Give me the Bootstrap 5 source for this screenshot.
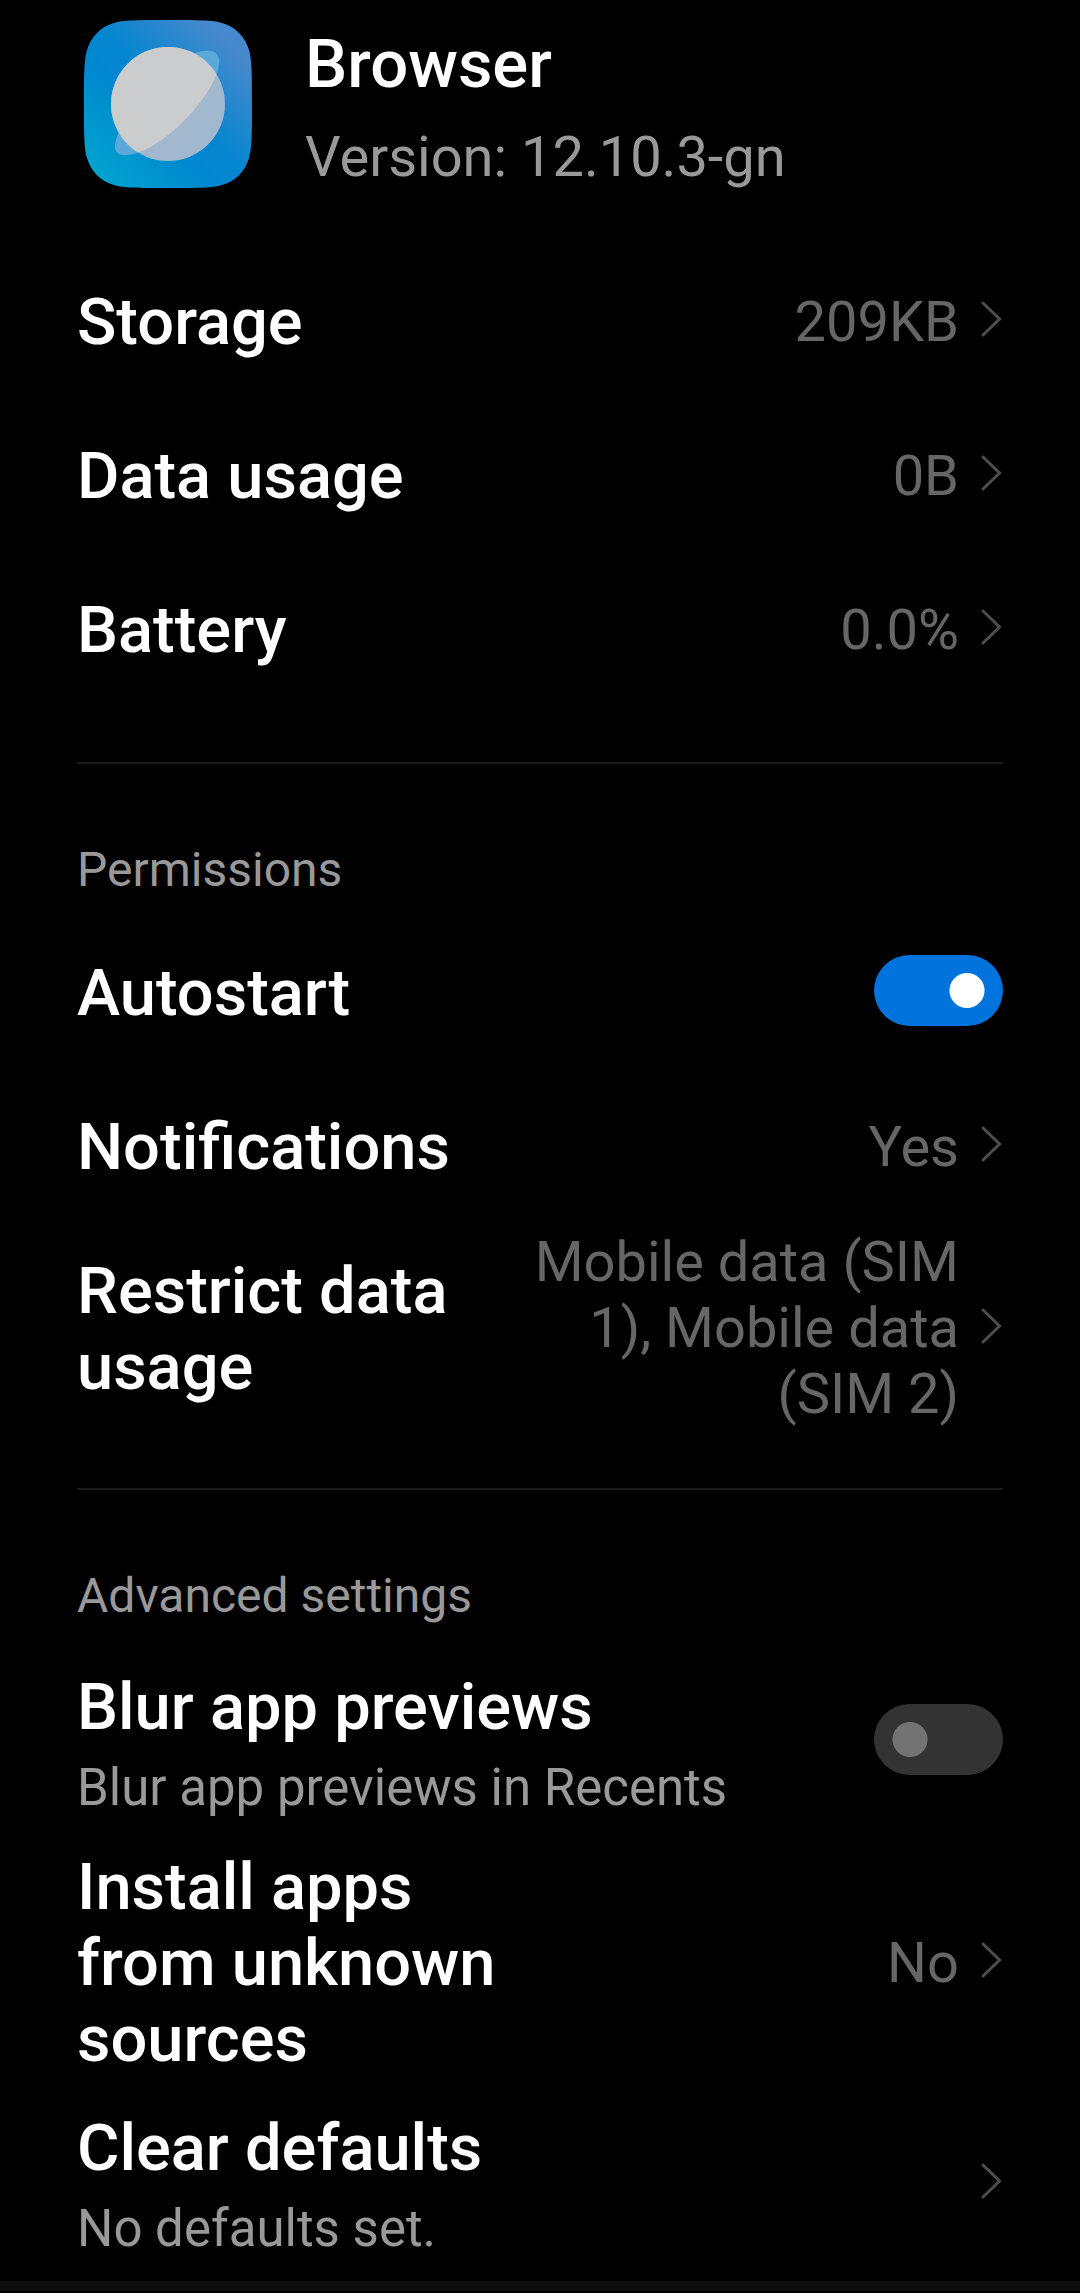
<!DOCTYPE html>
<html lang="en" data-bs-theme="dark">
<head>
<meta charset="utf-8">
<meta name="viewport" content="width=device-width, initial-scale=1">
<title>Browser - App info</title>
<link href="https://cdn.jsdelivr.net/npm/bootstrap@5.3.0/dist/css/bootstrap.min.css" rel="stylesheet">
<style>
body { background: #000; color: #fff; font-family: Roboto, "Noto Sans", sans-serif; }
.page-pad { padding-left: 77px; padding-right: 77px; }
.app-head { padding: 20px 7px 52px; gap: 53px; }
.app-icon { width: 168px; height: 168px; }
.app-text { padding-top: 6px; gap: 22px; }
.app-name, .row-title { font-size: 65px; line-height: 76px; font-weight: 500; }
.app-name { font-size: 67px; }
.app-version { font-size: 56px; line-height: 66px; color: #999; }
.setting { min-height: 154px; padding: 3px 0; gap: 20px; color: #fff; }
.setting-tall { min-height: 201px; }
.row-text { padding-top: 6px; }
.setting-tall .row-text { padding-top: 8px; }
.row-narrow { max-width: 48%; }
.row-sub { font-size: 51px; line-height: 62px; margin-top: 12px; color: #999; }
.row-value { font-size: 56px; line-height: 66px; color: #666; padding-top: 5px; max-width: 430px; }
.chevron { width: 24px; height: 38px; }
.group-line { height: 2px; background: #1a1a1a; margin: 58px 0 0; }
.group-title { font-size: 48px; line-height: 58px; font-weight: 400; color: #999; margin: 0; padding: 77px 0 14px; }
.form-check-input.toggle {
  width: 129px; height: 71px; border: 0; border-radius: 36px; margin: 0;
  background-color: #333; background-position: 0 0; background-size: 100% 100%;
  background-image: radial-gradient(circle at 36px 50%, #737373 17px, transparent 18px);
}
.form-check-input.toggle:checked {
  background-color: #0073dd; background-position: 0 0;
  background-image: radial-gradient(circle at 93px 50%, #fff 17px, transparent 18px);
}
.foot-band { height: 10px; background: #0e0e0e; }
</style>
</head>
<body>
<svg class="d-none" aria-hidden="true">
  <symbol id="chev" viewBox="0 0 24 38"><path d="M4 3 20.500 19 4 35" fill="none" stroke="#4d4d4d" stroke-width="3" stroke-linecap="round"/></symbol>
</svg>
<main class="page-pad">
  <header class="app-head d-flex align-items-start">
    <svg class="app-icon flex-shrink-0" viewBox="0 0 168 168" role="img" aria-label="Browser icon">
      <defs>
        <linearGradient id="tile" x1="0" y1="1" x2="1" y2="0">
          <stop offset="0.08" stop-color="#00a3ce"/><stop offset="0.4" stop-color="#0087d0"/><stop offset="0.54" stop-color="#0886d0"/><stop offset="0.86" stop-color="#4689cc"/>
        </linearGradient>
        <clipPath id="globe"><circle cx="84" cy="84" r="57"/></clipPath>
      </defs>
      <path fill="url(#tile)" d="M84 0C113 0 129 0 138 3C152 7 161 17 165 30C168 40 168 56 168 84S168 128 165 138C161 151 152 161 138 165C129 168 113 168 84 168S39 168 30 165C16 161 7 151 3 138C0 128 0 112 0 84S0 40 3 30C7 17 16 7 30 3C39 0 55 0 84 0Z"/>
      <path fill="#5aa9d8" d="M111 33C124 29 135 30 135 41C135 47 134 52 131 58L56 132C45 136 31 138 31 127C31 122 32 118 35 112Z"/>
      <circle cx="84" cy="84" r="57" fill="#a2b8cf"/>
      <path clip-path="url(#globe)" fill="#cbcccd" d="M20 20H135V41C135 47 134 52 131 58C118 87 84 121 56 132L20 140Z"/>
    </svg>
    <div class="app-text d-flex flex-column">
      <h1 class="app-name mb-0">Browser</h1>
      <div class="app-version">Version: 12.10.3-gn</div>
    </div>
  </header>

  <section aria-label="Usage">
    <a href="#storage" class="setting d-flex align-items-center text-decoration-none">
      <span class="row-title row-text row-narrow me-auto">Storage</span>
      <span class="row-value text-end">209KB</span>
      <svg class="chevron flex-shrink-0"><use href="#chev"/></svg>
    </a>
    <a href="#data" class="setting d-flex align-items-center text-decoration-none">
      <span class="row-title row-text row-narrow me-auto">Data usage</span>
      <span class="row-value text-end">0B</span>
      <svg class="chevron flex-shrink-0"><use href="#chev"/></svg>
    </a>
    <a href="#battery" class="setting d-flex align-items-center text-decoration-none">
      <span class="row-title row-text row-narrow me-auto">Battery</span>
      <span class="row-value text-end">0.0%</span>
      <svg class="chevron flex-shrink-0"><use href="#chev"/></svg>
    </a>
  </section>

  <div class="group-line"></div>
  <section>
    <h2 class="group-title">Permissions</h2>
    <div class="setting d-flex align-items-center">
      <label class="row-title row-text me-auto" for="autostart">Autostart</label>
      <div class="form-switch p-0 m-0 d-flex"><input class="form-check-input toggle" type="checkbox" role="switch" id="autostart" checked></div>
    </div>
    <a href="#notifications" class="setting d-flex align-items-center text-decoration-none">
      <span class="row-title row-text row-narrow me-auto">Notifications</span>
      <span class="row-value text-end">Yes</span>
      <svg class="chevron flex-shrink-0"><use href="#chev"/></svg>
    </a>
    <a href="#restrict" class="setting d-flex align-items-center text-decoration-none">
      <span class="row-title row-text row-narrow me-auto">Restrict data usage</span>
      <span class="row-value text-end">Mobile data (SIM 1), Mobile data (SIM 2)</span>
      <svg class="chevron flex-shrink-0"><use href="#chev"/></svg>
    </a>
  </section>

  <div class="group-line"></div>
  <section>
    <h2 class="group-title">Advanced settings</h2>
    <div class="setting setting-tall d-flex align-items-center">
      <label class="row-text d-flex flex-column me-auto" for="blur">
        <span class="row-title">Blur app previews</span>
        <span class="row-sub">Blur app previews in Recents</span>
      </label>
      <div class="form-switch p-0 m-0 d-flex"><input class="form-check-input toggle" type="checkbox" role="switch" id="blur"></div>
    </div>
    <a href="#install" class="setting d-flex align-items-center text-decoration-none">
      <span class="row-title row-text row-narrow me-auto">Install apps from unknown sources</span>
      <span class="row-value text-end">No</span>
      <svg class="chevron flex-shrink-0"><use href="#chev"/></svg>
    </a>
    <a href="#defaults" class="setting setting-tall d-flex align-items-center text-decoration-none">
      <span class="row-text d-flex flex-column me-auto">
        <span class="row-title">Clear defaults</span>
        <span class="row-sub">No defaults set.</span>
      </span>
      <svg class="chevron flex-shrink-0"><use href="#chev"/></svg>
    </a>
  </section>
</main>
<div class="foot-band"></div>
<script src="https://cdn.jsdelivr.net/npm/bootstrap@5.3.0/dist/js/bootstrap.bundle.min.js"></script>
</body>
</html>
